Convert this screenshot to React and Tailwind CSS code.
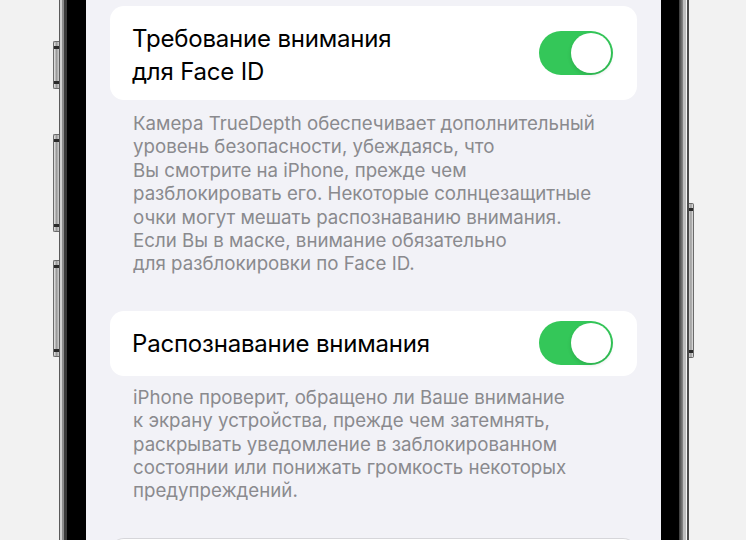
import React from "react";

function Toggle() {
  return (
    <div className="relative h-[44px] w-[74px] shrink-0 rounded-full bg-[#34c759]">
      <div className="absolute right-[2px] top-[2px] h-[40px] w-[40px] rounded-full bg-white shadow-[0_2px_4px_rgba(0,0,0,0.12)]" />
    </div>
  );
}

function SideButton({ className }) {
  return (
    <div
      className={`flex w-[6px] shrink-0 flex-col justify-between rounded-l-[2px] border border-r-0 border-[#6b6b6b] bg-gradient-to-r from-[#e8e8e8] via-[#9a9a9a] to-[#d0d0d0] py-[4px] ${className}`}
    >
      <div className="h-[3px] w-full bg-[#2a2a2a]" />
      <div className="h-[3px] w-full bg-[#2a2a2a]" />
    </div>
  );
}

export default function App() {
  const font = { fontFamily: "Inter, 'Noto Sans', sans-serif" };
  return (
    <div
      className="flex h-[540px] w-[746px] overflow-hidden bg-[#f2f2f2]"
      style={font}
    >
      {/* left outside with buttons */}
      <div className="flex w-[59px] shrink-0 flex-col items-end">
        <SideButton className="mt-[41px] h-[48px]" />
        <SideButton className="mt-[45px] h-[98px]" />
        <SideButton className="mt-[28px] h-[97px]" />
      </div>
      {/* left frame */}
      <div className="w-[1px] shrink-0 bg-[#5a5a5a]" />
      <div className="w-[2px] shrink-0 bg-[#cfcfcf]" />
      <div className="w-[2px] shrink-0 bg-[#8c8c8c]" />
      <div className="w-[3px] shrink-0 bg-[#3a3a3a]" />
      <div className="w-[19px] shrink-0 bg-black" />

      {/* screen */}
      <div className="flex h-[540px] w-[575px] shrink-0 flex-col overflow-hidden bg-[#f2f2f7] px-[24px] pt-[6px]">
        <div className="flex h-[94px] shrink-0 items-center justify-between rounded-[14px] bg-white pl-[22px] pr-[24px]">
          <div className="pt-[3px] text-[24px] leading-[33px] tracking-[-0.2px] text-black">
            Требование внимания
            <br />
            для Face ID
          </div>
          <Toggle />
        </div>
        <div className="mt-[12px] shrink-0 whitespace-nowrap pl-[23px] text-[18.7px] leading-[23.4px] text-[#8a8a8e]">
          <div>Камера TrueDepth обеспечивает дополнительный</div>
          <div>уровень безопасности, убеждаясь, что</div>
          <div>Вы смотрите на iPhone, прежде чем</div>
          <div>разблокировать его. Некоторые солнцезащитные</div>
          <div>очки могут мешать распознаванию внимания.</div>
          <div>Если Вы в маске, внимание обязательно</div>
          <div>для разблокировки по Face ID.</div>
        </div>

        <div className="mt-[35px] flex h-[65px] shrink-0 items-center justify-between rounded-[14px] bg-white pl-[22px] pr-[24px]">
          <div className="text-[24px] leading-[33px] tracking-[-0.2px] text-black">
            Распознавание внимания
          </div>
          <Toggle />
        </div>
        <div className="mt-[10px] shrink-0 whitespace-nowrap pl-[23px] text-[18.7px] leading-[23.4px] text-[#8a8a8e]">
          <div>iPhone проверит, обращено ли Ваше внимание</div>
          <div>к экрану устройства, прежде чем затемнять,</div>
          <div>раскрывать уведомление в заблокированном</div>
          <div>состоянии или понижать громкость некоторых</div>
          <div>предупреждений.</div>
        </div>

        <div className="mt-[35px] h-[60px] shrink-0 rounded-t-[14px] border-t border-[#d6d6da] bg-white" />
      </div>

      {/* right frame */}
      <div className="w-[18px] shrink-0 bg-black" />
      <div className="w-[4px] shrink-0 bg-gradient-to-r from-[#3a3a3a] to-[#8a8a8a]" />
      <div className="w-[3px] shrink-0 bg-[#bdbdbd]" />
      <div className="w-[1px] shrink-0 bg-[#f4f4f4]" />
      <div className="w-[2px] shrink-0 bg-[#4a4a4a]" />
      <div className="flex w-[5px] shrink-0 flex-col items-start">
        <div className="mt-[203px] flex h-[155px] w-[5px] shrink-0 flex-col justify-between rounded-r-[2px] border border-l-0 border-[#6b6b6b] bg-gradient-to-r from-[#d0d0d0] via-[#9a9a9a] to-[#e8e8e8] py-[4px]">
          <div className="h-[3px] w-full bg-[#2a2a2a]" />
          <div className="h-[3px] w-full bg-[#2a2a2a]" />
        </div>
      </div>
      <div className="flex-1 bg-[#f2f2f2]" />
    </div>
  );
}
